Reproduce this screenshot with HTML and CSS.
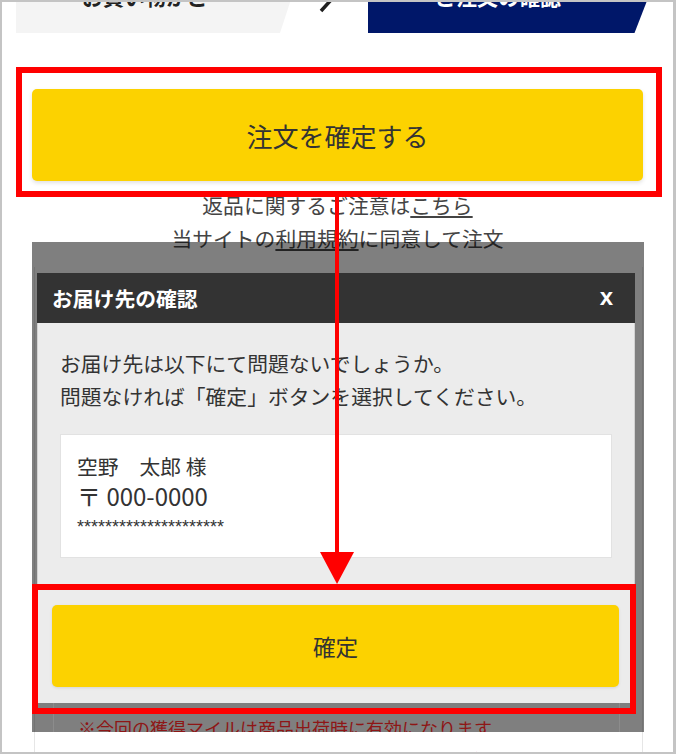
FILE: index.html
```html
<!DOCTYPE html>
<html lang="ja">
<head>
<meta charset="utf-8">
<title>注文確認</title>
<link rel="stylesheet" href="styles.css">
</head>
<body>
<div class="frame">
  <div class="steps">
    <div class="tab tab-done">お買い物かご</div>
    <svg class="chev" width="69" height="58" viewBox="0 0 69 58"><polyline points="20,-6 42,14 22,36" fill="none" stroke="#1e1e1e" stroke-width="3.5"/></svg>
    <div class="tab tab-current">ご注文の確認</div>
  </div>

  <button class="order-btn">注文を確定する</button>

  <div class="notes">
    <p>返品に関するご注意は<a class="link">こちら</a></p>
    <p>当サイトの<a class="link">利用規約</a>に同意して注文</p>
  </div>

  <div class="card">
    <p class="card-note">※お届け日はご注文内容により異なる場合がございます。</p>
  </div>

  <div class="overlay">
    <div class="modal">
      <div class="modal-head">
        <span class="modal-title">お届け先の確認</span>
        <span class="modal-close">x</span>
      </div>
      <div class="modal-body">
        <p class="msg">お届け先は以下にて問題ないでしょうか。<br>問題なければ「確定」ボタンを選択してください。</p>
        <div class="address">
          <p class="addr-name">空野　太郎 様</p>
          <p class="addr-zip">〒 000-0000</p>
          <p class="addr-mask">*********************</p>
        </div>
        <button class="confirm-btn">確定</button>
      </div>
    </div>
    <div class="peek">
      <p class="peek-note">※今回の獲得マイルは商品出荷時に有効になります。</p>
    </div>
  </div>

  <div class="mark mark-order"></div>
  <svg class="arrow" width="36" height="390" viewBox="0 0 36 390"><rect x="15" y="0" width="4" height="356" fill="#ff0000"/><polygon points="0,355 34,355 17,387" fill="#ff0000"/></svg>
  <div class="mark mark-confirm"></div>
</div>
</body>
</html>
```
FILE: styles.css
```css
* { box-sizing: border-box; }
html, body { margin: 0; padding: 0; background: #fff; }
body { font-family: "Noto Sans CJK JP", "Noto Sans", sans-serif; color: #333; }
p { margin: 0; }

.frame {
  position: relative;
  width: 676px;
  height: 754px;
  border-style: solid;
  border-color: #c4c4c4;
  border-width: 2px 3px 2px 2px;
  overflow: hidden;
  background: #fff;
}

/* step indicator (scrolled partly out of view) */
.steps {
  display: flex;
  height: 58px;
  margin-top: -27px;
}
.tab {
  height: 58px;
  padding-top: 6px;
  font-size: 21px;
  font-weight: 700;
  line-height: 30px;
  white-space: nowrap;
}
.tab-done {
  margin-left: 14px;
  width: 283px;
  padding-left: 66px;
  background: #f4f4f4;
  color: #222;
  clip-path: polygon(0 0, 100% 0, calc(100% - 19px) 100%, 0 100%);
}
.chev { flex: none; display: block; }
.tab-current {
  width: 289px;
  padding-left: 67px;
  background: #001769;
  color: #fff;
  clip-path: polygon(0 0, 100% 0, calc(100% - 22.5px) 100%, 0 100%);
}

.order-btn {
  display: block;
  margin: 56px 0 0 30px;
  width: 611px;
  height: 92px;
  border: 0;
  border-radius: 5px;
  background: #fcd200;
  box-shadow: 0 2px 4px rgba(0, 0, 0, 0.12);
  font-family: inherit;
  font-size: 26px;
  color: #333;
}

.notes {
  margin-top: 7.5px;
  text-align: center;
  font-size: 20.8px;
  line-height: 33px;
  color: #444;
}
.link { color: #444; text-decoration: underline; }

.card {
  margin: 12px 0 0 32px;
  width: 609px;
  height: 520px;
  border-left: 1px solid #e6e6e6;
  border-right: 1px solid #e6e6e6;
  padding: 480px 0 0 48px;
}
.card-note {
  font-size: 18px;
  line-height: 26px;
  color: #e60012;
}

/* modal layer */
.overlay {
  position: absolute;
  left: 30px;
  top: 240px;
  width: 612px;
  height: 490px;
  padding: 31px 9px 0 5px;
  background: rgba(0, 0, 0, 0.5);
  overflow: hidden;
}
.modal { width: 598px; }
.modal-head {
  height: 50px;
  display: flex;
  align-items: center;
  justify-content: space-between;
  padding: 0 22px 0 15px;
  background: #333;
  color: #fff;
}
.modal-title { font-size: 20.8px; font-weight: 700; }
.modal-close {
  font-family: "Liberation Sans", Arial, sans-serif;
  font-weight: 700;
  font-size: 24px;
  line-height: 24px;
  padding-bottom: 2px;
}
.modal-body {
  background: #ececec;
  border-left: 1px solid #d2d2d2;
  border-right: 1px solid #d2d2d2;
  padding: 23.5px 22px 16px;
}
.msg {
  font-size: 20.8px;
  line-height: 33px;
  color: #333;
}
.address {
  margin-top: 21.5px;
  height: 124px;
  background: #fff;
  border: 1px solid #e2e2e2;
  padding: 16px 0 0 16px;
  color: #333;
}
.addr-name { font-size: 20.8px; line-height: 30px; }
.addr-zip { font-size: 24px; line-height: 30px; }
.addr-mask {
  font-family: "Liberation Sans", Arial, sans-serif;
  font-size: 18px;
  line-height: 32px;
  height: 32px;
}
.confirm-btn {
  display: block;
  margin: 47px -7px 0 -8px;
  width: calc(100% + 15px);
  height: 82px;
  border: 0;
  border-radius: 5px;
  background: #fcd200;
  box-shadow: 0 1px 3px rgba(0, 0, 0, 0.1);
  font-family: inherit;
  font-size: 22.6px;
  color: #333;
}
.peek {
  margin-left: 16px;
  width: 567px;
  height: 60px;
  border-left: 1px solid #8c8c8c;
  border-right: 1px solid #8c8c8c;
  padding: 12px 0 0 24px;
}
.peek-note {
  font-size: 18px;
  line-height: 26px;
  color: #8e1616;
  white-space: nowrap;
}

/* red annotations */
.mark {
  position: absolute;
  border: 6px solid #ff0000;
}
.mark-order { left: 14px; top: 65px; width: 646px; height: 130px; }
.mark-confirm { left: 30px; top: 582px; width: 604px; height: 130px; }
.arrow { position: absolute; left: 318px; top: 195px; display: block; }
```
